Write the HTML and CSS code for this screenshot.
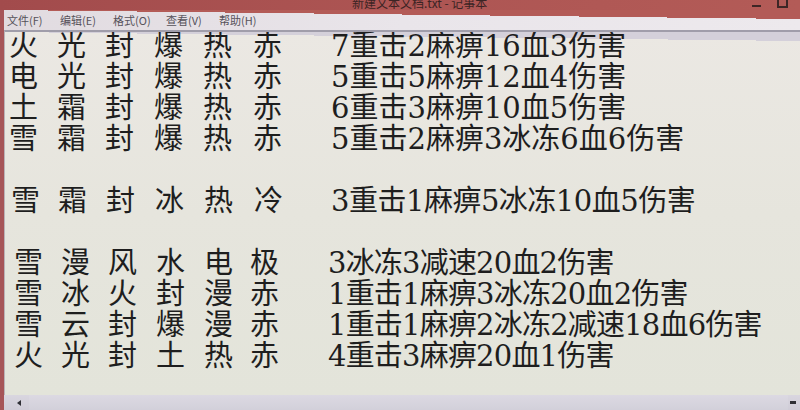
FILE: index.html
```html
<!DOCTYPE html>
<html lang="zh-CN">
<head>
<meta charset="utf-8">
<title>新建文本文档.txt - 记事本</title>
<link rel="stylesheet" href="styles.css">
</head>
<body>
<div class="window">
  <div class="titlebar">
    <span class="title">新建文本文档.txt - 记事本</span>
    <span class="controls"><span class="min"></span><span class="max"></span></span>
  </div>
  <div class="frame">
    <div class="menubar">
      <span class="menu">文件(F)</span>
      <span class="menu">编辑(E)</span>
      <span class="menu">格式(O)</span>
      <span class="menu">查看(V)</span>
      <span class="menu">帮助(H)</span>
    </div>
    <div class="editor">
      <div class="line"><span>火</span><span>光</span><span>封</span><span>爆</span><span>热</span><span>赤</span><span class="stats">7重击2麻痹16血3伤害</span></div>
      <div class="line"><span>电</span><span>光</span><span>封</span><span>爆</span><span>热</span><span>赤</span><span class="stats">5重击5麻痹12血4伤害</span></div>
      <div class="line"><span>土</span><span>霜</span><span>封</span><span>爆</span><span>热</span><span>赤</span><span class="stats">6重击3麻痹10血5伤害</span></div>
      <div class="line"><span>雪</span><span>霜</span><span>封</span><span>爆</span><span>热</span><span>赤</span><span class="stats">5重击2麻痹3冰冻6血6伤害</span></div>
      <div class="line blank"></div>
      <div class="line mid"><span>雪</span><span>霜</span><span>封</span><span>冰</span><span>热</span><span>冷</span><span class="stats">3重击1麻痹5冰冻10血5伤害</span></div>
      <div class="line blank"></div>
      <div class="line low"><span>雪</span><span>漫</span><span>风</span><span>水</span><span>电</span><span>极</span><span class="stats">3冰冻3减速20血2伤害</span></div>
      <div class="line low"><span>雪</span><span>冰</span><span>火</span><span>封</span><span>漫</span><span>赤</span><span class="stats">1重击1麻痹3冰冻20血2伤害</span></div>
      <div class="line low"><span>雪</span><span>云</span><span>封</span><span>爆</span><span>漫</span><span>赤</span><span class="stats">1重击1麻痹2冰冻2减速18血6伤害</span></div>
      <div class="line low"><span>火</span><span>光</span><span>封</span><span>土</span><span>热</span><span>赤</span><span class="stats">4重击3麻痹20血1伤害</span></div>
    </div>
    <div class="hscroll">
      <span class="arrow-left"></span>
      <span class="track"></span>
      <span class="corner-mark"></span>
    </div>
  </div>
</div>
</body>
</html>
```

FILE: styles.css
```css
html, body {
  margin: 0;
  padding: 0;
  width: 800px;
  height: 410px;
  overflow: hidden;
  background: #a65558;
}

.window {
  width: 800px;
  height: 410px;
  display: flex;
  flex-direction: column;
}

.titlebar {
  height: 10px;
  flex: none;
  overflow: hidden;
  display: flex;
  align-items: flex-start;
  background: linear-gradient(to right, #a24b4c, #ad5553 50%, #b35b57);
}

.title {
  margin-left: 352px;
  font-family: "Noto Sans CJK SC", sans-serif;
  font-size: 12px;
  line-height: 5px;
  color: #3c2424;
  white-space: nowrap;
}

.controls {
  margin-left: auto;
  margin-right: 12px;
  display: flex;
  align-items: flex-start;
  gap: 16px;
}

.min {
  width: 9px;
  height: 2px;
  margin-top: 5px;
  background: #3d2626;
}

.max {
  width: 7px;
  height: 6px;
  border: 2px solid #3d2626;
  border-top-width: 0;
}

.frame {
  flex: 1;
  display: flex;
  flex-direction: column;
  border-left: 4px solid #a65558;
  min-height: 0;
}

.menubar {
  height: 20px;
  flex: none;
  display: flex;
  align-items: center;
  gap: 13px;
  padding-left: 3px;
  background:
    linear-gradient(to bottom left, #b35b57 50%, transparent 50%) top left / 100% 9px no-repeat,
    linear-gradient(to right, #e1dbe0, #e9e5ea 50%, #ede9ed);
  font-family: "Noto Sans CJK SC", sans-serif;
  font-size: 11px;
  color: #56525a;
}

.menu {
  width: 40px;
  white-space: nowrap;
}

.editor {
  flex: 1;
  min-height: 0;
  border-top: 2px solid #a09daa;
  border-left: 1px solid #b9b3b8;
  background:
    linear-gradient(to bottom left, #d4d0da 50%, transparent 50%) top left / 100% 9px no-repeat,
    linear-gradient(to bottom, #ebe8e3, #e6e5dd 50%, #e3e4da);
  color: #1e1e1e;
  font-family: "DejaVu Serif", "Noto Sans CJK SC", serif;
  font-size: 29px;
  overflow: hidden;
}

.line {
  height: 31px;
  line-height: 29px;
  display: grid;
  grid-template-columns: 48px 48px 49px 49px 50px 78px auto;
  padding-left: 4px;
  padding-bottom: 2px;
  box-sizing: border-box;
  white-space: nowrap;
}

.line.mid {
  padding-left: 6px;
  grid-template-columns: 47px 48px 49px 49px 50px 77px auto;
}

.line.mid .stats {
  letter-spacing: -0.5px;
}

.line.low {
  padding-left: 9px;
  grid-template-columns: 47px 47px 48px 48px 46px 78px auto;
}

.line.low .stats {
  letter-spacing: -0.8px;
}

.hscroll {
  height: 15px;
  flex: none;
  display: flex;
  align-items: center;
  background: linear-gradient(to bottom, #d9d6df, #cfccd7);
}

.arrow-left {
  width: 0;
  height: 0;
  margin-left: 13px;
  border-top: 3px solid transparent;
  border-bottom: 3px solid transparent;
  border-right: 4px solid #2f2f35;
}

.track {
  flex: 1;
  height: 15px;
  margin-left: 8px;
  background: linear-gradient(to bottom, #dcd9e2, #d2d0da);
}

.corner-mark {
  width: 6px;
  height: 3px;
  margin: 0 4px 0 2px;
  background: #2f2f35;
}
```
